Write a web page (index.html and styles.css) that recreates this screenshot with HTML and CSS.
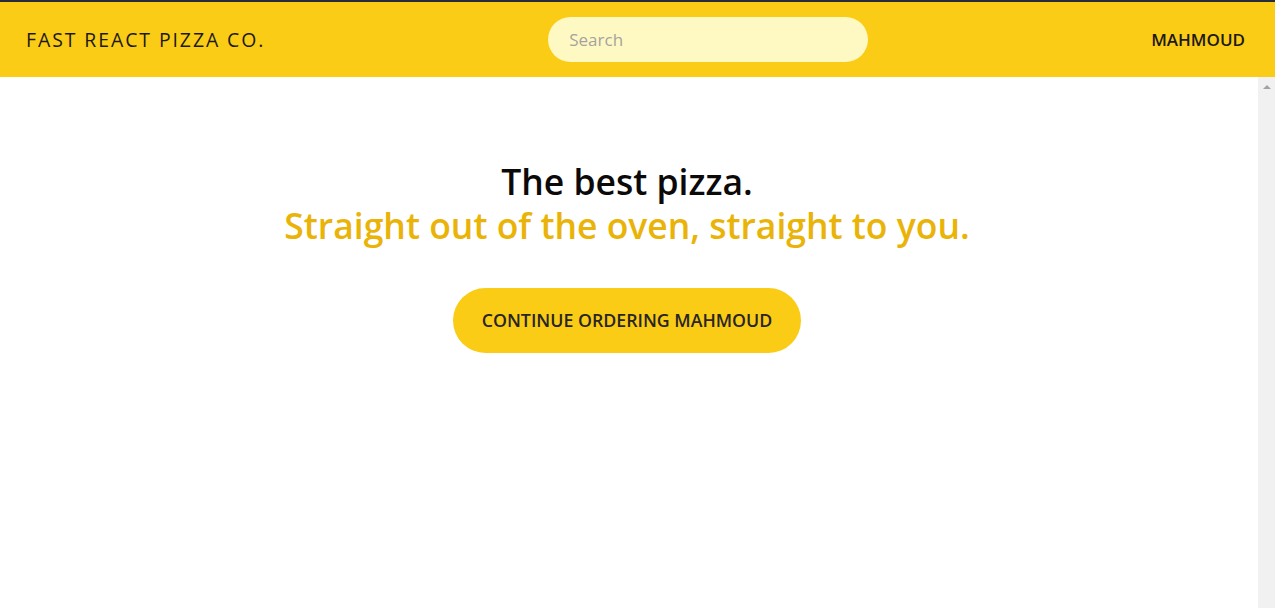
FILE: index.html
```html
<!DOCTYPE html>
<html lang="en">
<head>
<meta charset="utf-8">
<title>Fast React Pizza Co.</title>
<link rel="stylesheet" href="styles.css">
</head>
<body>
<div class="app">
  <header class="header">
    <a class="logo" href="#">Fast React Pizza Co.</a>
    <form class="search">
      <input class="search-input" type="text" placeholder="Search">
    </form>
    <div class="username">Mahmoud</div>
  </header>
  <div class="content">
    <main class="main">
      <div class="home">
        <h1 class="title">The best pizza.<br><span class="title-accent">Straight out of the oven, straight to you.</span></h1>
        <a class="btn" href="#">Continue ordering Mahmoud</a>
      </div>
    </main>
    <div class="scrollbar" aria-hidden="true">
      <div class="scroll-btn"><span class="arrow-up"></span></div>
    </div>
  </div>
</div>
</body>
</html>
```

FILE: styles.css
```css
* { box-sizing: border-box; }
html, body { margin: 0; padding: 0; height: 100%; }
body {
  font-family: "Open Sans", "Noto Sans", sans-serif;
  color: #1c1917;
  background: #fff;
}
.app {
  height: 100vh;
  display: grid;
  grid-template-rows: auto 1fr;
  border-top: 2px solid #262c3a;
}
.header {
  background: #facc15;
  height: 75px;
  padding: 0 30px 0 26px;
  display: flex;
  align-items: center;
  justify-content: space-between;
}
.logo {
  color: #1c1917;
  text-decoration: none;
  text-transform: uppercase;
  letter-spacing: 0.1em;
  font-size: 19.4px;
  font-weight: 400;
}
.search { display: flex; }
.search-input {
  width: 320px;
  height: 45px;
  border: none;
  outline: none;
  border-radius: 9999px;
  background: #fef9c3;
  padding: 0 21px;
  font-family: inherit;
  font-size: 17px;
  color: #1c1917;
}
.search-input::placeholder { color: #a8a29e; }
.username {
  text-transform: uppercase;
  font-weight: 600;
  font-size: 17px;
}
.content {
  display: grid;
  grid-template-columns: 1fr 17px;
  min-height: 0;
}
.scrollbar {
  background: #f1f1f1;
}
.scroll-btn {
  height: 17px;
  display: flex;
  align-items: center;
  justify-content: center;
  padding-top: 3px;
}
.arrow-up {
  width: 0;
  height: 0;
  border-left: 4px solid transparent;
  border-right: 4px solid transparent;
  border-bottom: 4px solid #a3a3a3;
}
.home {
  padding: 82px 4px 0 0;
  text-align: center;
  display: flex;
  flex-direction: column;
  align-items: center;
}
.title {
  margin: 0 0 41px;
  font-size: 35.5px;
  line-height: 44px;
  font-weight: 600;
  color: #0c0a09;
}
.title-accent { color: #eab308; }
.btn {
  display: inline-block;
  background: #facc15;
  color: #292524;
  text-decoration: none;
  text-transform: uppercase;
  font-weight: 600;
  font-size: 17.75px;
  padding: 0 29px;
  height: 65px;
  line-height: 65px;
  border-radius: 9999px;
}
```
